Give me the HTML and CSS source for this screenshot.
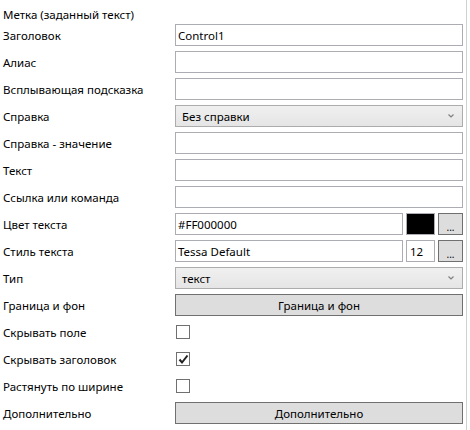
FILE: index.html
```html
<!DOCTYPE html>
<html>
<head>
<meta charset="utf-8">
<link rel="stylesheet" href="styles.css">
</head>
<body>
<div class="panel">
  <div class="title">Метка (заданный текст)</div>
  <div class="grid">
    <div class="label">Заголовок</div>
    <div class="field"><div class="tb">Control1</div></div>

    <div class="label">Алиас</div>
    <div class="field"><div class="tb"></div></div>

    <div class="label">Всплывающая подсказка</div>
    <div class="field"><div class="tb"></div></div>

    <div class="label">Справка</div>
    <div class="field"><div class="combo"><span>Без справки</span><svg class="chev" width="6" height="4" viewBox="0 0 6 4"><path d="M0.5 0.5 L3 3 L5.5 0.5" fill="none" stroke="#808080" stroke-width="1.2"/></svg></div></div>

    <div class="label">Справка - значение</div>
    <div class="field"><div class="tb"></div></div>

    <div class="label">Текст</div>
    <div class="field"><div class="tb"></div></div>

    <div class="label">Ссылка или команда</div>
    <div class="field"><div class="tb"></div></div>

    <div class="label">Цвет текста</div>
    <div class="field split">
      <div class="tb grow">#FF000000</div>
      <div class="swatch"></div>
      <div class="dots">...</div>
    </div>

    <div class="label">Стиль текста</div>
    <div class="field split">
      <div class="tb grow">Tessa Default</div>
      <div class="tb size">12</div>
      <div class="dots">...</div>
    </div>

    <div class="label">Тип</div>
    <div class="field"><div class="combo"><span>текст</span><svg class="chev" width="6" height="4" viewBox="0 0 6 4"><path d="M0.5 0.5 L3 3 L5.5 0.5" fill="none" stroke="#808080" stroke-width="1.2"/></svg></div></div>

    <div class="label">Граница и фон</div>
    <div class="field"><div class="btn">Граница и фон</div></div>

    <div class="label">Скрывать поле</div>
    <div class="field"><div class="cb"></div></div>

    <div class="label">Скрывать заголовок</div>
    <div class="field"><div class="cb"><svg width="11" height="11" viewBox="0 0 11 11"><path d="M1.5 5.5 L4 8.5 L9.5 1.5" fill="none" stroke="#212121" stroke-width="2"/></svg></div></div>

    <div class="label">Растянуть по ширине</div>
    <div class="field"><div class="cb"></div></div>

    <div class="label">Дополнительно</div>
    <div class="field"><div class="btn">Дополнительно</div></div>
  </div>
</div>
</body>
</html>
```
FILE: styles.css
```css
html, body {
  margin: 0;
  padding: 0;
  background: #ffffff;
}
body {
  font-family: "Noto Sans", "Open Sans", sans-serif;
  font-size: 11.5px;
  color: #000000;
}
.panel {
  width: 466px;
  height: 430px;
  border-right: 1px solid #d0d0d0;
  box-sizing: content-box;
}
.title {
  height: 24px;
  line-height: 30px;
  padding-left: 3px;
  box-sizing: border-box;
}
.grid {
  display: grid;
  grid-template-columns: 172px 288px;
  grid-auto-rows: 22px;
  row-gap: 5px;
  padding-left: 3px;
}
.label {
  display: flex;
  align-items: center;
  padding-top: 1px;
  white-space: nowrap;
}
.field {
  display: flex;
  align-items: center;
}
.tb {
  box-sizing: border-box;
  width: 100%;
  height: 22px;
  border: 1px solid #abadb3;
  background: #fff;
  padding: 0 2px;
  display: flex;
  align-items: center;
  white-space: nowrap;
}
.split {
  gap: 3px;
}
.split .grow {
  width: 228px;
  flex: none;
}
.split .size {
  width: 29px;
  flex: none;
  padding-left: 3px;
}
.swatch {
  box-sizing: border-box;
  width: 29px;
  height: 22px;
  background: #000;
  border: 1px solid #abadb3;
  flex: none;
}
.dots {
  box-sizing: border-box;
  width: 25px;
  height: 22px;
  background: #dddddd;
  border: 1px solid #707070;
  flex: none;
  text-align: center;
  line-height: 22px;
  font-size: 10px;
  padding-top: 2px;
}
.combo {
  box-sizing: border-box;
  width: 100%;
  height: 22px;
  border: 1px solid #acacac;
  background: linear-gradient(#f0f0f0, #e5e5e5);
  display: flex;
  align-items: center;
  justify-content: space-between;
  padding: 0 8px 0 6px;
}
.chev {
  display: block;
  margin-top: -1px;
}
.btn {
  box-sizing: border-box;
  width: 100%;
  height: 22px;
  border: 1px solid #707070;
  background: #dddddd;
  display: flex;
  align-items: center;
  justify-content: center;
}
.cb {
  box-sizing: border-box;
  width: 14px;
  height: 14px;
  border: 1px solid #707070;
  background: #fff;
  margin-left: 1px;
  display: flex;
  align-items: center;
  justify-content: center;
}
.cb svg {
  display: block;
}
```
